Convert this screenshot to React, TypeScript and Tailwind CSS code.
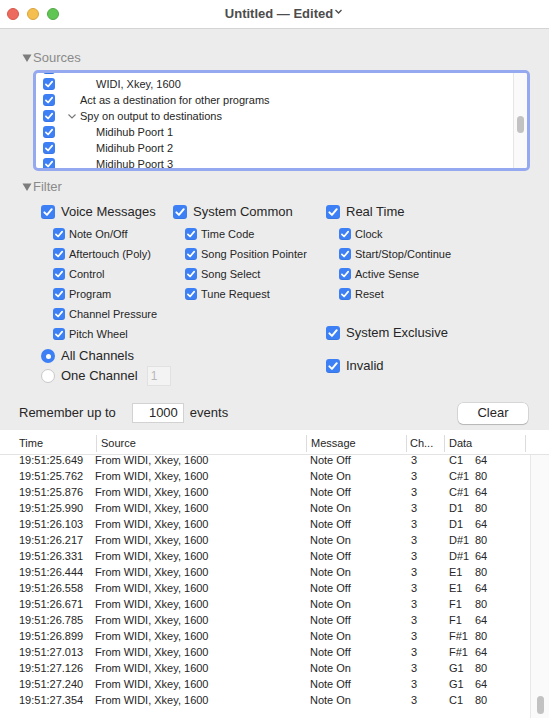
import React from 'react';

const font = "font-['Liberation_Sans','Helvetica','Arial',sans-serif]";

function Check({ size = 12 }: { size?: number }) {
  return (
    <span
      className="shrink-0 inline-flex items-center justify-center rounded-[3px] bg-[#3d80f6] shadow-[inset_0_-1px_0_rgba(0,0,0,0.08)]"
      style={{ width: size, height: size }}
    >
      <svg width={size} height={size} viewBox="0 0 12 12">
        <path d="M2.9 6.3 L5.1 8.5 L9.2 3.6" fill="none" stroke="white" strokeWidth="1.7" strokeLinecap="round" strokeLinejoin="round" />
      </svg>
    </span>
  );
}

function Radio({ on }: { on?: boolean }) {
  return on ? (
    <span className="shrink-0 w-[14px] h-[14px] rounded-full bg-[#3d80f6] flex items-center justify-center">
      <span className="w-[5px] h-[5px] rounded-full bg-white" />
    </span>
  ) : (
    <span className="shrink-0 w-[14px] h-[14px] rounded-full bg-white border border-[#c8c8c8]" />
  );
}

function Main({ label }: { label: string }) {
  return (
    <div className="h-[20px] flex items-center gap-[6px] text-[13px] text-[#262626]">
      <Check size={14} />
      <span>{label}</span>
    </div>
  );
}

function Sub({ label }: { label: string }) {
  return (
    <div className="h-[20px] flex items-center gap-[4px] pl-[12px] text-[11px] text-[#262626]">
      <Check size={12} />
      <span>{label}</span>
    </div>
  );
}

function Disclosure({ label }: { label: string }) {
  return (
    <div className="h-[16px] pl-[22px] flex items-center text-[13px] text-[#8a8a8a]">
      <svg width="10" height="10" viewBox="0 0 10 10" className="mr-[1px]">
        <path d="M0.5 1.5 L9.5 1.5 L5 9 Z" fill="#7d7d7d" />
      </svg>
      {label}
    </div>
  );
}

const rows: [string, string, string, string][] = [
  ['19:51:25.649', 'Note Off', 'C1', '64'],
  ['19:51:25.762', 'Note On', 'C#1', '80'],
  ['19:51:25.876', 'Note Off', 'C#1', '64'],
  ['19:51:25.990', 'Note On', 'D1', '80'],
  ['19:51:26.103', 'Note Off', 'D1', '64'],
  ['19:51:26.217', 'Note On', 'D#1', '80'],
  ['19:51:26.331', 'Note Off', 'D#1', '64'],
  ['19:51:26.444', 'Note On', 'E1', '80'],
  ['19:51:26.558', 'Note Off', 'E1', '64'],
  ['19:51:26.671', 'Note On', 'F1', '80'],
  ['19:51:26.785', 'Note Off', 'F1', '64'],
  ['19:51:26.899', 'Note On', 'F#1', '80'],
  ['19:51:27.013', 'Note Off', 'F#1', '64'],
  ['19:51:27.126', 'Note On', 'G1', '80'],
  ['19:51:27.240', 'Note Off', 'G1', '64'],
  ['19:51:27.354', 'Note On', 'C1', '80'],
];

export default function App() {
  return (
    <div className={`w-[549px] h-[718px] overflow-hidden flex flex-col bg-white ${font}`}>
      {/* Title bar */}
      <div className="h-[29px] shrink-0 bg-white border-b border-[#d4d4d4] flex items-center relative">
        <div className="flex gap-[8px] pl-[7px]">
          <span className="w-[12px] h-[12px] rounded-full bg-[#ec6a5e] border border-[#d8574b]" />
          <span className="w-[12px] h-[12px] rounded-full bg-[#f4bf4f] border border-[#dba43a]" />
          <span className="w-[12px] h-[12px] rounded-full bg-[#61c554] border border-[#4fab42]" />
        </div>
        <div className="flex-1 flex justify-center pr-[56px] pl-[16px] text-[13px] font-bold text-[#4c4c4c]">
          <span>Untitled — Edited</span>
          <svg width="9" height="14" viewBox="0 0 9 14" className="ml-[1px]">
            <path d="M1.5 6 L4.5 9 L7.5 6" fill="none" stroke="#4c4c4c" strokeWidth="1.3" />
          </svg>
        </div>
      </div>

      {/* Gray controls area */}
      <div className="shrink-0 bg-[#ececec] pt-[21px] pb-[7px] flex flex-col">
        <Disclosure label="Sources" />

        <div className="mt-[4px] ml-[33px] w-[497px] h-[101px] rounded-[5px] border-[3px] border-[#95a9f0] bg-white flex overflow-hidden">
          <div className="flex-1 overflow-hidden">
            <div className="-mt-[13px] text-[11px] text-[#262626]">
              <div className="h-[16px] flex items-center pl-[7px]"><Check /></div>
              <div className="h-[16px] flex items-center pl-[7px]"><Check /><span className="ml-[41px]">WIDI, Xkey, 1600</span></div>
              <div className="h-[16px] flex items-center pl-[7px]"><Check /><span className="ml-[25px]">Act as a destination for other programs</span></div>
              <div className="h-[16px] flex items-center pl-[7px]">
                <Check />
                <svg width="10" height="10" viewBox="0 0 10 10" className="ml-[12px] mr-[3px]">
                  <path d="M1.5 3.5 L5 7 L8.5 3.5" fill="none" stroke="#777" strokeWidth="1.1" />
                </svg>
                <span>Spy on output to destinations</span>
              </div>
              <div className="h-[16px] flex items-center pl-[7px]"><Check /><span className="ml-[41px]">Midihub Poort 1</span></div>
              <div className="h-[16px] flex items-center pl-[7px]"><Check /><span className="ml-[41px]">Midihub Poort 2</span></div>
              <div className="h-[16px] flex items-center pl-[7px]"><Check /><span className="ml-[41px]">Midihub Poort 3</span></div>
            </div>
          </div>
          <div className="w-[14px] shrink-0 bg-[#fafafa] border-l border-[#e6e6e6] flex justify-center pt-[43px]">
            <span className="w-[7px] h-[17px] rounded-full bg-[#c2c2c2]" />
          </div>
        </div>

        <div className="mt-[8px]">
          <Disclosure label="Filter" />
        </div>

        <div className="mt-[7px] pl-[41px] flex">
          <div className="w-[132px] flex flex-col">
            <Main label="Voice Messages" />
            <div className="mt-[2px]">
              <Sub label="Note On/Off" />
              <Sub label="Aftertouch (Poly)" />
              <Sub label="Control" />
              <Sub label="Program" />
              <Sub label="Channel Pressure" />
              <Sub label="Pitch Wheel" />
            </div>
            <div className="mt-[2px] h-[20px] flex items-center gap-[6px] text-[13px] text-[#262626] whitespace-nowrap">
              <Radio on />
              <span>All Channels</span>
            </div>
            <div className="h-[20px] flex items-center gap-[6px] text-[13px] text-[#262626] whitespace-nowrap">
              <Radio />
              <span>One Channel</span>
              <span className="ml-[3px] w-[24px] h-[20px] bg-[#f3f3f3] border border-[#e1e1e1] text-[12px] text-[#b8b8b8] pl-[3px] flex items-center">1</span>
            </div>
          </div>
          <div className="w-[153px] flex flex-col">
            <Main label="System Common" />
            <div className="mt-[2px]">
              <Sub label="Time Code" />
              <Sub label="Song Position Pointer" />
              <Sub label="Song Select" />
              <Sub label="Tune Request" />
            </div>
          </div>
          <div className="flex flex-col">
            <Main label="Real Time" />
            <div className="mt-[2px] pl-[1px]">
              <Sub label="Clock" />
              <Sub label="Start/Stop/Continue" />
              <Sub label="Active Sense" />
              <Sub label="Reset" />
            </div>
            <div className="mt-[19px]"><Main label="System Exclusive" /></div>
            <div className="mt-[13px]"><Main label="Invalid" /></div>
          </div>
        </div>

        <div className="mt-[17px] h-[20px] flex items-center pl-[19px] pr-[21px] text-[13px] text-[#262626]">
          <span>Remember up to</span>
          <span className="ml-[16px] w-[52px] h-[20px] bg-white border border-[#d2d2d2] flex items-center justify-end pr-[5px]">1000</span>
          <span className="ml-[6px]">events</span>
          <span className="ml-auto w-[70px] h-[21px] bg-white rounded-[5px] shadow-[0_0_0_0.5px_rgba(0,0,0,0.18),0_1px_1px_rgba(0,0,0,0.15)] flex items-center justify-center">Clear</span>
        </div>
      </div>

      {/* Event table */}
      <div className="flex-1 flex flex-col bg-white min-h-0 text-[11px] text-[#262626]">
        <div className="h-[25px] shrink-0 border-b border-[#e3e3e3] flex items-center pt-[3px]">
          <span className="w-[96px] pl-[19px]">Time</span>
          <span className="w-[210px] h-[17px] border-l border-[#dcdcdc] pl-[4px] flex items-center">Source</span>
          <span className="w-[100px] h-[17px] border-l border-[#dcdcdc] pl-[4px] flex items-center">Message</span>
          <span className="w-[38px] h-[17px] border-l border-[#dcdcdc] pl-[3px] flex items-center">Ch...</span>
          <span className="w-[82px] h-[17px] border-l border-r border-[#dcdcdc] pl-[4px] flex items-center">Data</span>
        </div>
        <div className="flex-1 flex min-h-0">
          <div className="flex-1 overflow-hidden">
            <div className="-mt-[3px]">
              {rows.map(([t, m, n, v]) => (
                <div key={t} className="h-[16px] flex items-center whitespace-nowrap">
                  <span className="w-[95px] pl-[19px]">{t}</span>
                  <span className="w-[215px]">From WIDI, Xkey, 1600</span>
                  <span className="w-[101px]">{m}</span>
                  <span className="w-[38px]">3</span>
                  <span className="w-[26px]">{n}</span>
                  <span>{v}</span>
                </div>
              ))}
            </div>
          </div>
          <div className="w-[19px] shrink-0 bg-[#fafafa] border-l border-[#e8e8e8] flex flex-col justify-end items-center pb-[4px]">
            <span className="w-[7px] h-[18px] rounded-full bg-[#c2c2c2]" />
          </div>
        </div>
      </div>
    </div>
  );
}
